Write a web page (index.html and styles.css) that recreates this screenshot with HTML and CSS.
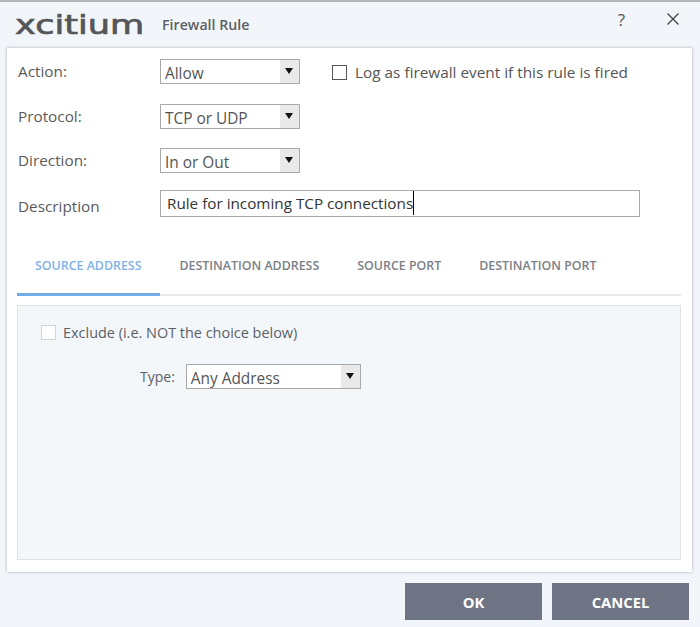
FILE: index.html
```html
<!DOCTYPE html>
<html lang="en">
<head>
  <meta charset="UTF-8">
  <title>Firewall Rule</title>
  <link rel="stylesheet" href="styles.css">
</head>
<body>
  <div class="dialog">
    <header class="title-bar">
      <span class="logo"><span class="logo-text">xcitium</span></span>
      <span class="title">Firewall Rule</span>
      <span class="help">?</span>
      <svg class="close" width="14" height="14" viewBox="0 0 14 14">
        <path d="M1.5 1.5 L12.5 12.5 M12.5 1.5 L1.5 12.5" stroke="#444" stroke-width="1.3" fill="none"/>
      </svg>
    </header>

    <main class="card">
      <div class="form-row row-action">
        <label class="field-label">Action:</label>
        <div class="select">
          <span class="select-value">Allow</span>
          <span class="select-arrow"></span>
        </div>
        <div class="log-option">
          <span class="checkbox"></span>
          <span>Log as firewall event if this rule is fired</span>
        </div>
      </div>
      <div class="form-row row-protocol">
        <label class="field-label">Protocol:</label>
        <div class="select">
          <span class="select-value">TCP or UDP</span>
          <span class="select-arrow"></span>
        </div>
      </div>
      <div class="form-row row-direction">
        <label class="field-label">Direction:</label>
        <div class="select">
          <span class="select-value">In or Out</span>
          <span class="select-arrow"></span>
        </div>
      </div>
      <div class="form-row row-description">
        <label class="field-label description-label">Description</label>
        <div class="text-input">Rule for incoming TCP connections<span class="caret"></span></div>
      </div>

      <nav class="tabs">
        <span class="tab tab-active">SOURCE ADDRESS</span>
        <span class="tab">DESTINATION ADDRESS</span>
        <span class="tab">SOURCE PORT</span>
        <span class="tab">DESTINATION PORT</span>
      </nav>

      <section class="panel">
        <div class="exclude">
          <span class="checkbox checkbox-light"></span>
          <span>Exclude (i.e. NOT the choice below)</span>
        </div>
        <div class="type-row">
          <span>Type:</span>
          <div class="select select-type">
            <span class="select-value">Any Address</span>
            <span class="select-arrow"></span>
          </div>
        </div>
      </section>
    </main>

    <footer class="actions">
      <button class="btn">OK</button>
      <button class="btn">CANCEL</button>
    </footer>
  </div>
</body>
</html>
```

FILE: styles.css
```css
html, body {
  margin: 0;
  padding: 0;
  height: 100%;
  background-color: #f2f6fa;
  font-family: "Open Sans", "Noto Sans", sans-serif;
  color: #555;
}

.dialog {
  display: flex;
  flex-direction: column;
  height: 627px;
  box-sizing: border-box;
  border-top: 2px solid #b4b6b9;
  overflow: hidden;
}

/* title bar */
.title-bar {
  display: flex;
  align-items: center;
  height: 46px;
  padding-left: 15px;
  box-sizing: border-box;
}

.logo {
  width: 134px;
  height: 32px;
  overflow: hidden;
}

.logo-text {
  display: inline-block;
  font-family: "DejaVu Sans", sans-serif;
  font-size: 26px;
  line-height: 32px;
  font-weight: 400;
  color: #54565a;
  -webkit-text-stroke: 0.7px #54565a;
  transform: scaleX(1.35);
  transform-origin: left center;
}

.title {
  margin-left: 13px;
  margin-bottom: 2px;
  font-size: 14.2px;
  font-weight: 600;
  color: #5c5f66;
}

.help {
  margin-left: auto;
  margin-bottom: 12px;
  font-size: 17px;
  color: #555;
}

.close {
  margin-left: 41px;
  margin-right: 20px;
  margin-bottom: 12px;
}

/* main card */
.card {
  width: 685px;
  height: 524px;
  margin-left: 7px;
  box-sizing: border-box;
  background: #fff;
  box-shadow: 0 0 3px rgba(0, 0, 0, 0.3);
  padding: 11px 11px 0 10px;
}

.form-row {
  display: flex;
  align-items: center;
  height: 25px;
}

.row-protocol { margin-top: 20px; }
.row-direction { margin-top: 19px; }
.row-description { margin-top: 17px; height: 27px; }

.field-label {
  width: 142px;
  margin-left: 1px;
  margin-bottom: 1px;
  font-size: 15.3px;
  color: #5a5a5a;
}

.description-label { position: relative; top: 3px; }

.select {
  display: flex;
  width: 140px;
  height: 25px;
  box-sizing: border-box;
  border: 1px solid #a9a9a9;
  background: #fff;
}

.select-value {
  flex: 1;
  padding-left: 4px;
  padding-top: 1px;
  font-size: 15.4px;
  line-height: 25px;
  color: #555;
}

.select-arrow {
  width: 19px;
  background: #e9e9e9;
  position: relative;
}

.select-arrow::after {
  content: "";
  position: absolute;
  left: 5px;
  top: 8px;
  border-left: 4px solid transparent;
  border-right: 4px solid transparent;
  border-top: 6px solid #111;
}

.log-option {
  display: flex;
  align-items: center;
  gap: 8px;
  margin-left: 32px;
  padding-top: 1px;
  font-size: 15.35px;
  color: #555;
}

.checkbox {
  width: 15px;
  height: 15px;
  box-sizing: border-box;
  border: 1px solid #555;
  background: #fff;
}

.checkbox-light { border-color: #d4d4d4; }

.text-input {
  display: flex;
  align-items: center;
  width: 480px;
  height: 27px;
  box-sizing: border-box;
  border: 1px solid #a9a9a9;
  padding-left: 6px;
  padding-bottom: 2px;
  font-size: 15.25px;
  color: #333;
}

.caret {
  width: 1px;
  height: 24px;
  background: #000;
}

/* tabs */
.tabs {
  display: flex;
  height: 48px;
  margin-top: 29px;
  border-bottom: 2px solid #e8e8e8;
  box-sizing: content-box;
}

.tab {
  padding: 11px 19px 0 19px;
  font-size: 12.4px;
  font-weight: 600;
  color: #7b7f87;
}

.tab-active {
  padding-left: 18px;
  color: #7fb2e8;
  height: 36px;
  border-bottom: 3px solid #72ace6;
}

/* source address panel */
.panel {
  height: 255px;
  margin-top: 9px;
  box-sizing: border-box;
  background: #f3f7fa;
  border: 1px solid #e2e2e2;
}

.exclude {
  display: flex;
  align-items: center;
  gap: 7px;
  margin: 17px 0 0 23px;
  font-size: 14.45px;
  color: #5c5f66;
}

.type-row {
  display: flex;
  align-items: center;
  gap: 11px;
  margin: 22px 0 0 122px;
  font-size: 14px;
  color: #5c5f66;
}

.select-type { width: 175px; }

/* bottom buttons */
.actions {
  display: flex;
  justify-content: flex-end;
  gap: 10px;
  padding: 11px 11px 0 0;
}

.btn {
  width: 137px;
  height: 37px;
  border: none;
  background: #6f7485;
  color: #fff;
  font-family: inherit;
  font-size: 14.8px;
  font-weight: 700;
}
```
